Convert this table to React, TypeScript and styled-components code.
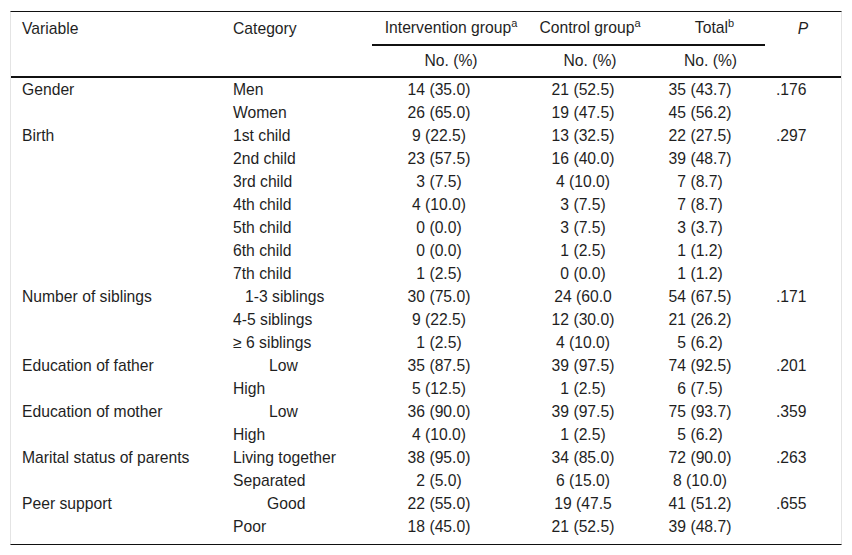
import styled, { createGlobalStyle } from 'styled-components';

const GlobalStyle = createGlobalStyle`
  body {
    margin: 0;
    background: #fff;
    font-family: "Liberation Sans", Arial, sans-serif;
    color: #1f1f1f;
  }
`;

const Page = styled.div`
  padding: 11px 0 0 10px;
`;

const Frame = styled.div`
  width: 832px;
  box-sizing: border-box;
  padding-bottom: 6px;
  border-left: 1px solid #e4e4e4;
  border-right: 1px solid #e4e4e4;
  border-top: 1px solid #111;
  border-bottom: 1px solid #111;
`;

const Table = styled.table`
  width: 830px;
  table-layout: fixed;
  border-collapse: collapse;
  font-size: 15.7px;
`;

const HeadCell = styled.th<{ $pl?: number; $center?: boolean; $rule?: boolean }>`
  font-weight: normal;
  text-align: ${p => (p.$center ? 'center' : 'left')};
  padding: 0 0 0 ${p => p.$pl ?? 0}px;
  height: 32px;
  vertical-align: middle;
  border-bottom: ${p => (p.$rule ? '2px solid #111' : 'none')};
  white-space: nowrap;
`;

const SubHeadRow = styled.tr`
  height: 32px;
  border-bottom: 2px solid #111;
`;

const SubCell = styled.th<{ $pl?: number }>`
  font-weight: normal;
  text-align: center;
  padding: 0 0 0 ${p => p.$pl ?? 0}px;
`;

const Row = styled.tr`
  height: 23px;
`;

const Cell = styled.td<{ $pl?: number; $center?: boolean; $pr?: number }>`
  padding: 0 ${p => p.$pr ?? 0}px 0 ${p => p.$pl ?? 0}px;
  text-align: ${p => (p.$center ? 'center' : 'left')};
  white-space: nowrap;
  line-height: 23px;
`;

const Sup = styled.sup`
  font-size: 11px;
  line-height: 0;
  vertical-align: 6px;
`;

const PLabel = styled.i`
  font-style: italic;
`;

type Item = {
  variable?: string;
  category: string;
  indent?: number;
  values: [string, string, string];
  p?: string;
};

const rows: Item[] = [
  { variable: 'Gender', category: 'Men', values: ['14 (35.0)', '21 (52.5)', '35 (43.7)'], p: '.176' },
  { category: 'Women', values: ['26 (65.0)', '19 (47.5)', '45 (56.2)'] },
  { variable: 'Birth', category: '1st child', values: ['9 (22.5)', '13 (32.5)', '22 (27.5)'], p: '.297' },
  { category: '2nd child', values: ['23 (57.5)', '16 (40.0)', '39 (48.7)'] },
  { category: '3rd child', values: ['3 (7.5)', '4 (10.0)', '7 (8.7)'] },
  { category: '4th child', values: ['4 (10.0)', '3 (7.5)', '7 (8.7)'] },
  { category: '5th child', values: ['0 (0.0)', '3 (7.5)', '3 (3.7)'] },
  { category: '6th child', values: ['0 (0.0)', '1 (2.5)', '1 (1.2)'] },
  { category: '7th child', values: ['1 (2.5)', '0 (0.0)', '1 (1.2)'] },
  { variable: 'Number of siblings', category: '1-3 siblings', indent: 23, values: ['30 (75.0)', '24 (60.0', '54 (67.5)'], p: '.171' },
  { category: '4-5 siblings', values: ['9 (22.5)', '12 (30.0)', '21 (26.2)'] },
  { category: '≥ 6 siblings', values: ['1 (2.5)', '4 (10.0)', '5 (6.2)'] },
  { variable: 'Education of father', category: 'Low', indent: 47, values: ['35 (87.5)', '39 (97.5)', '74 (92.5)'], p: '.201' },
  { category: 'High', values: ['5 (12.5)', '1 (2.5)', '6 (7.5)'] },
  { variable: 'Education of mother', category: 'Low', indent: 47, values: ['36 (90.0)', '39 (97.5)', '75 (93.7)'], p: '.359' },
  { category: 'High', values: ['4 (10.0)', '1 (2.5)', '5 (6.2)'] },
  { variable: 'Marital status of parents', category: 'Living together', values: ['38 (95.0)', '34 (85.0)', '72 (90.0)'], p: '.263' },
  { category: 'Separated', values: ['2 (5.0)', '6 (15.0)', '8 (10.0)'] },
  { variable: 'Peer support', category: 'Good', indent: 45, values: ['22 (55.0)', '19 (47.5', '41 (51.2)'], p: '.655' },
  { category: 'Poor', values: ['18 (45.0)', '21 (52.5)', '39 (48.7)'] },
];

// right padding per number column, shifts the centred values a bit left
const valuePad = [24, 14, 15];

const App = () => {
  return (
    <Page>
      <GlobalStyle />
      <Frame>
        <Table>
          <colgroup>
            <col style={{ width: 211 }} />
            <col style={{ width: 150 }} />
            <col style={{ width: 158 }} />
            <col style={{ width: 120 }} />
            <col style={{ width: 115 }} />
            <col style={{ width: 76 }} />
          </colgroup>
          <thead>
            <tr>
              <HeadCell $pl={11}>Variable</HeadCell>
              <HeadCell $pl={11}>Category</HeadCell>
              <HeadCell $center $rule>Intervention group<Sup>a</Sup></HeadCell>
              <HeadCell $center $rule>Control group<Sup>a</Sup></HeadCell>
              <HeadCell $center $rule $pl={14}>Total<Sup>b</Sup></HeadCell>
              <HeadCell $center><PLabel>P</PLabel></HeadCell>
            </tr>
            <SubHeadRow>
              <SubCell />
              <SubCell />
              <SubCell>No. (%)</SubCell>
              <SubCell>No. (%)</SubCell>
              <SubCell $pl={6}>No. (%)</SubCell>
              <SubCell />
            </SubHeadRow>
          </thead>
          <tbody>
            {rows.map((r, i) => (
              <Row key={i}>
                <Cell $pl={11}>{r.variable ?? ''}</Cell>
                <Cell $pl={r.indent ?? 11}>{r.category}</Cell>
                {r.values.map((v, j) => (
                  <Cell key={j} $center $pr={valuePad[j]}>{v}</Cell>
                ))}
                <Cell $pl={11}>{r.p ?? ''}</Cell>
              </Row>
            ))}
          </tbody>
        </Table>
      </Frame>
    </Page>
  );
};

export default App;
